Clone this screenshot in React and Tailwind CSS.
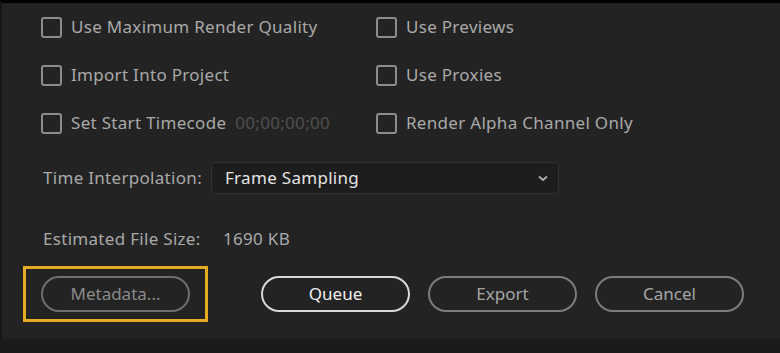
import React from 'react';

const Check = ({ label, extra }) => (
  <div className="flex items-center h-[48px]">
    <div className="w-[21px] h-[21px] rounded-[3px] border-2 border-[#8c8c8c] shrink-0"></div>
    <span className="ml-[9px] text-[#a9a9a9]">{label}</span>
    {extra && <span className="ml-[9px] text-[#4f4f4f]">{extra}</span>}
  </div>
);

const Pill = ({ children, className }) => (
  <button className={`w-[149px] h-[36px] rounded-full border-2 flex items-center justify-center tracking-normal ${className}`}>
    {children}
  </button>
);

export default function App() {
  return (
    <div className="w-[780px] h-[353px] bg-[#1b1b1b] text-[17px] tracking-[0.3px] overflow-hidden" style={{ fontFamily: '"Noto Sans", "Open Sans", sans-serif' }}>
      <div className="h-[339px] bg-[#232323] border-t-[3px] border-black border-l-[2px] border-l-[#161616] pl-[39px]">
        <div className="grid grid-cols-[335px_1fr]">
          <Check label="Use Maximum Render Quality" />
          <Check label="Use Previews" />
          <Check label="Import Into Project" />
          <Check label="Use Proxies" />
          <Check label="Set Start Timecode" extra="00;00;00;00" />
          <Check label="Render Alpha Channel Only" />
        </div>

        <div className="flex items-center mt-[15px]">
          <span className="ml-[2px] w-[168px] text-[#a9a9a9]">Time Interpolation:</span>
          <div className="w-[348px] h-[32px] rounded-[4px] bg-[#1d1d1d] border border-[#303030] flex items-center justify-between pl-[13px] pr-[8px]">
            <span className="text-[#e4e4e4]">Frame Sampling</span>
            <svg width="14" height="14" viewBox="0 0 14 14" fill="none" stroke="#b0b0b0" strokeWidth="1.8">
              <path d="M3 5.5 L7 9 L11 5.5" />
            </svg>
          </div>
        </div>

        <div className="flex items-center mt-[32px]">
          <span className="ml-[2px] w-[180px] text-[#a9a9a9]">Estimated File Size:</span>
          <span className="text-[#a9a9a9]">1690 KB</span>
        </div>

        <div className="flex items-center mt-[14px] -ml-[18px]">
          <div className="border-[3px] border-[#e5ac21] px-[15px] py-[7px]">
            <Pill className="border-[#6e6e6e] text-[#8a8a8a]">Metadata...</Pill>
          </div>
          <div className="flex gap-[18px] ml-[53px]">
            <Pill className="border-[#d9d9d9] text-[#f0f0f0]">Queue</Pill>
            <Pill className="border-[#7c7c7c] text-[#a5a5a5]">Export</Pill>
            <Pill className="border-[#7c7c7c] text-[#a5a5a5]">Cancel</Pill>
          </div>
        </div>
      </div>
    </div>
  );
}
